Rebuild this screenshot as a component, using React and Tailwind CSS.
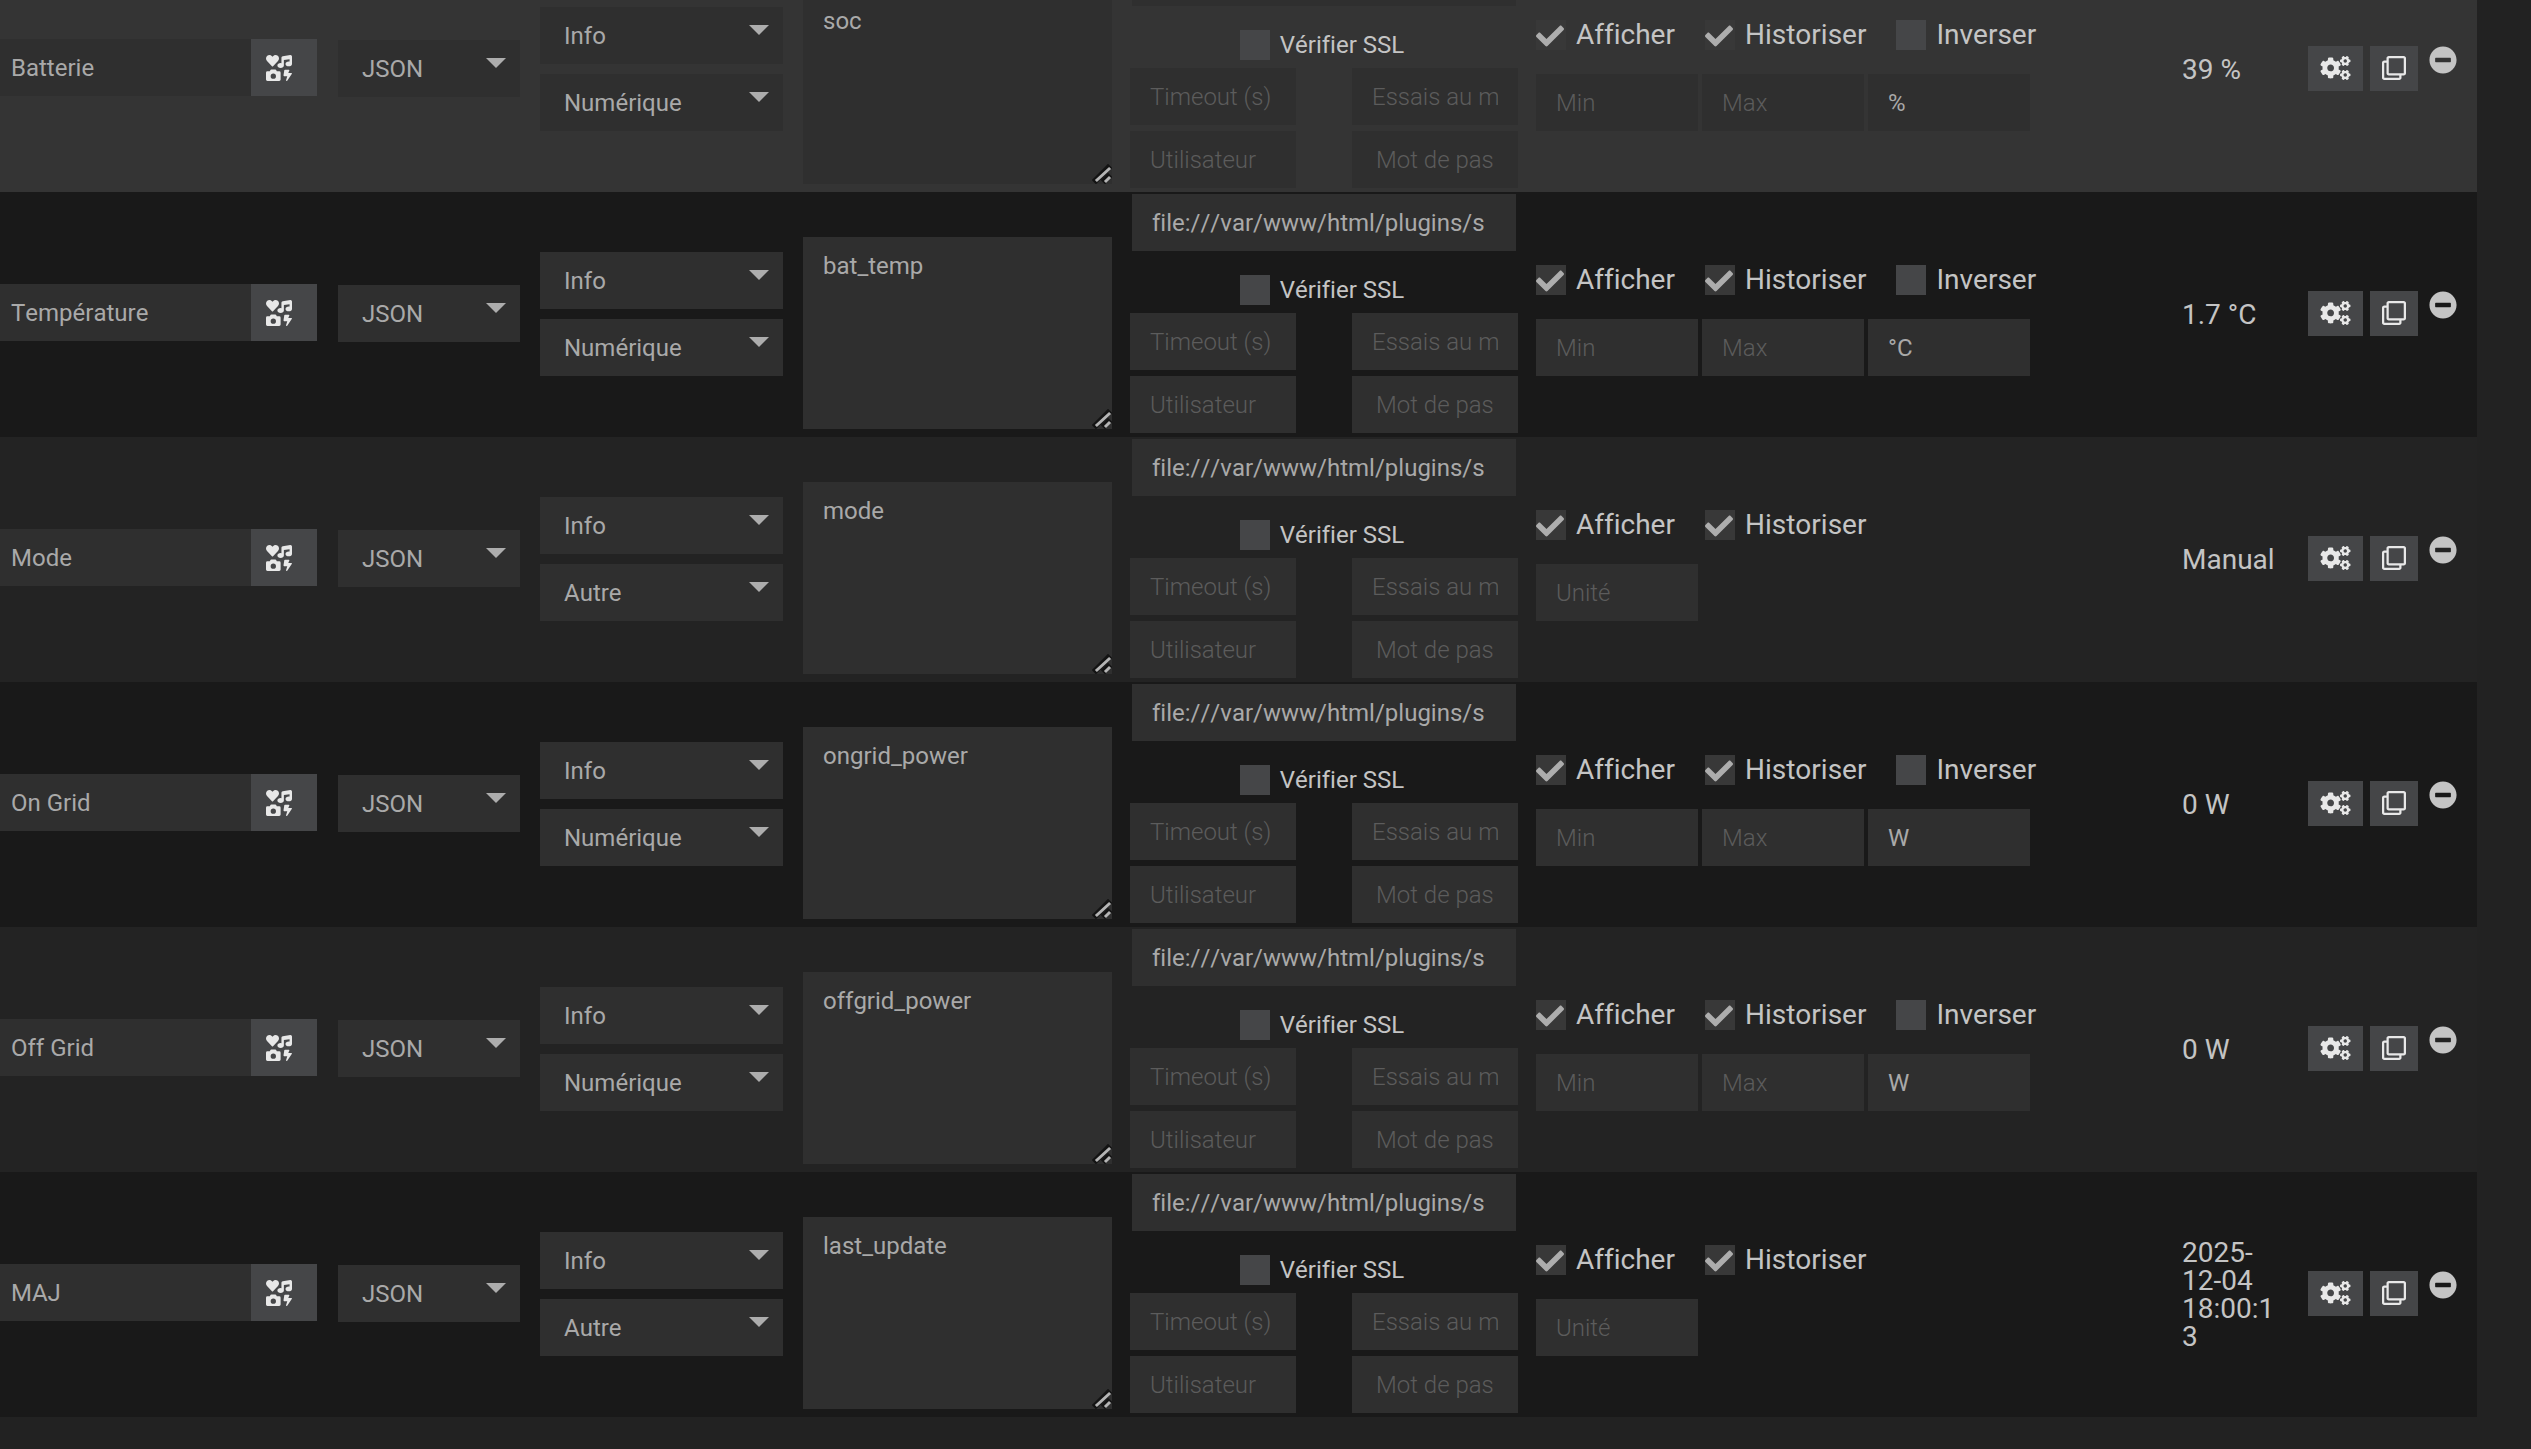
import React from 'react';
import { FaCheck, FaCogs, FaIcons, FaMinusCircle, FaRegClone } from 'react-icons/fa';

const commands = [
  { id: 1, name: 'Batterie', subType: 'Numérique', request: 'soc', unit: '%', value: '39 %', hovered: true },
  { id: 2, name: 'Température', subType: 'Numérique', request: 'bat_temp', unit: '°C', value: '1.7 °C' },
  { id: 3, name: 'Mode', subType: 'Autre', request: 'mode', unit: '', value: 'Manual' },
  { id: 4, name: 'On Grid', subType: 'Numérique', request: 'ongrid_power', unit: 'W', value: '0 W' },
  { id: 5, name: 'Off Grid', subType: 'Numérique', request: 'offgrid_power', unit: 'W', value: '0 W' },
  { id: 6, name: 'MAJ', subType: 'Autre', request: 'last_update', unit: '', value: '2025-12-04 18:00:13' },
];

const Select = ({ label, value, options }) => (
  <div className="relative">
    <select
      aria-label={label}
      defaultValue={value}
      className="block h-[57px] w-full appearance-none bg-[#2f2f2f] pl-6 pr-10 pt-px text-2xl text-[#a9a9a9] outline-none"
    >
      {options.map((option) => (
        <option key={option}>{option}</option>
      ))}
    </select>
    <svg className="pointer-events-none absolute right-3.5 top-[18px] h-2.5 w-5" viewBox="0 0 20 10">
      <path d="M0 0h20L10 10z" fill="#adadad" />
    </svg>
  </div>
);

const Field = ({ label, type = 'text', value, className = 'px-5' }) => (
  <input
    type={type}
    aria-label={label}
    placeholder={label}
    defaultValue={value}
    className={`block h-[57px] w-full min-w-0 bg-[#2f2f2f] text-2xl text-[#a9a9a9] outline-none placeholder:font-light placeholder:text-[#5c5c5c] ${className}`}
  />
);

const Checkbox = ({ label, checked = false, className = 'gap-2.5 text-[28px]' }) => (
  <label className={`flex items-center leading-[30px] text-[#c4c4c4] ${className}`}>
    <span className="relative block size-[30px]">
      <input
        type="checkbox"
        defaultChecked={checked}
        className="peer block size-[30px] appearance-none bg-[#454648] checked:bg-[#383838]"
      />
      <FaCheck className="pointer-events-none absolute left-0 top-0.5 hidden size-7 text-[#adadad] peer-checked:block" />
    </span>
    {label}
  </label>
);

const RequestBox = ({ value }) => (
  <div className="relative mt-11">
    <textarea
      aria-label="Requête"
      defaultValue={value}
      className="block h-48 w-full resize-none bg-[#2f2f2f] px-5 py-3 text-2xl leading-[34px] text-[#a9a9a9] outline-none"
    />
    <svg
      className="pointer-events-none absolute bottom-0 right-0 size-5"
      viewBox="0 0 20 20"
      fill="none"
      strokeLinecap="square"
    >
      <path d="M4 16L16 4M13 16l3-3" stroke="#131313" strokeWidth="6" />
      <path d="M5 16L17 5M14 17l3-3" stroke="#b4b4b4" strokeWidth="3" />
    </svg>
  </div>
);

const CommandRow = ({ command }) => {
  const numeric = command.subType === 'Numérique';

  return (
    <tr className={command.hovered ? 'h-[245px] bg-[#343434]' : 'h-[245px] odd:bg-[#232323] even:bg-[#191919]'}>
      <td className="pb-1 pr-[11px]">
        <div className="flex">
          <Field label="Nom" value={command.name} className="flex-1 px-[11px]" />
          <button
            type="button"
            aria-label="Choisir une icône"
            className="flex h-[57px] w-[66px] shrink-0 items-center bg-[#454648] pl-[15px] text-[#e8e8e8]"
          >
            <FaIcons className="size-[26px]" />
          </button>
        </div>
      </td>
      <td className="px-2.5 pb-0.5">
        <Select label="Type de requête" value="JSON" options={['JSON', 'HTML', 'XML', 'Script']} />
      </td>
      <td className="px-2.5 pb-0.5">
        <div className="flex flex-col gap-2.5">
          <Select label="Type" value="Info" options={['Info', 'Action']} />
          <Select label="Sous-type" value={command.subType} options={['Numérique', 'Binaire', 'Autre']} />
        </div>
      </td>
      <td className="px-2.5 pb-2">
        <RequestBox value={command.request} />
      </td>
      <td className="px-2 pb-1 pt-0.5">
        <div className="px-0.5">
          <Field label="URL" value="file:///var/www/html/plugins/script/data/solarbank.json" className="pl-5 pr-8" />
        </div>
        <div className="flex justify-center pb-2 pr-1 pt-6">
          <Checkbox label="Vérifier SSL" className="gap-2.5 text-2xl" />
        </div>
        <div className="grid grid-cols-2 gap-x-14 gap-y-1.5">
          <Field label="Timeout (s)" />
          <Field label="Essais au maximum" />
          <Field label="Utilisateur" />
          <Field label="Mot de passe" className="px-6" />
        </div>
      </td>
      <td className="pl-2.5 pt-3">
        <div className="flex gap-[30px]">
          <Checkbox label="Afficher" checked />
          <Checkbox label="Historiser" checked />
          {numeric && <Checkbox label="Inverser" />}
        </div>
        <div className="mt-6 grid w-[494px] grid-cols-3 gap-1">
          {numeric && <Field label="Min" />}
          {numeric && <Field label="Max" />}
          <Field label="Unité" value={command.unit} />
        </div>
      </td>
      <td className="px-2.5 text-[28px] leading-7 text-[#c4c4c4] wrap-anywhere">{command.value}</td>
      <td className="pb-[3px] pl-2.5">
        <div className="flex items-start">
          <button
            type="button"
            aria-label="Configuration avancée"
            className="flex h-[45px] w-[55px] items-center justify-center bg-[#454648] text-[#e8e8e8]"
          >
            <FaCogs className="h-6 w-[31px]" />
          </button>
          <button
            type="button"
            aria-label="Dupliquer"
            className="ml-[7px] flex h-[45px] w-12 items-center justify-center bg-[#454648] text-[#e8e8e8]"
          >
            <FaRegClone className="size-6" />
          </button>
          <button type="button" aria-label="Supprimer" className="ml-[11px] text-[#c4c4c4]">
            <FaMinusCircle className="size-7" />
          </button>
        </div>
      </td>
    </tr>
  );
};

const App = () => {
  return (
    <div className="min-h-screen overflow-hidden bg-[#222222] pr-[54px] font-[Roboto,sans-serif] [font-kerning:none] [font-variant-ligatures:none]">
      {/* The list is scrolled part of the way into its first row */}
      <table className="-mt-[53px] w-full table-fixed border-collapse">
        <colgroup>
          <col className="w-[328px]" />
          <col className="w-[202px]" />
          <col className="w-[263px]" />
          <col className="w-[329px]" />
          <col className="w-[404px]" />
          <col />
          <col className="w-[126px]" />
          <col className="w-[179px]" />
        </colgroup>
        <tbody>
          {commands.map((command) => (
            <CommandRow key={command.id} command={command} />
          ))}
        </tbody>
      </table>
    </div>
  );
};

export default App;
